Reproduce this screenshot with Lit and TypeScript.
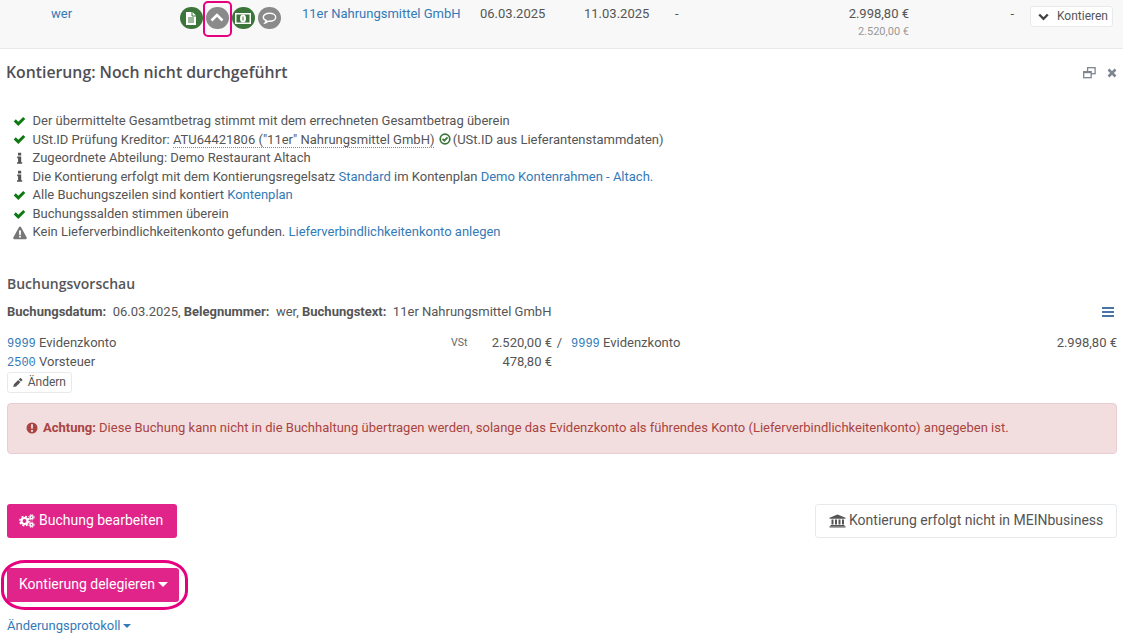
import { LitElement, html, css, svg } from "lit";
import { customElement } from "lit/decorators.js";

const check = svg`<path d="M.8 6.900 3 4.700l2.700 2.700L11 2.100l2.200 2.200-7.500 7.500z"/>`;
const info = svg`<path d="M4 .8h3.200v2.600H4zM3.200 4.600h4v5.600h1v1.600H3v-1.600h1.100V6.200h-.9z"/>`;
const warn = svg`<path fill-rule="evenodd" d="M7 .6c.5 0 .9.300 1.100.7l5.600 10.200c.4.800-.1 1.700-1 1.700H1.300c-.9 0-1.400-.9-1-1.700L5.900 1.300C6.100.9 6.500.6 7 .6zM6 4.400l.2 4.600h1.600L8 4.400zM6.100 9.800v1.800h1.800V9.800z"/>`;

type Row = { icon: "check" | "info" | "warn"; body: unknown };

@customElement("app-root")
export class AppRoot extends LitElement {
  static styles = css`
    :host { display: block; width: 1123px; height: 636px; overflow: hidden; position: relative; background: #fff;
      font-family: Roboto, "Liberation Sans", sans-serif; font-size: 13px; line-height: 18.57px; color: #555; }
    a { color: #337ab7; text-decoration: none; }
    svg { display: block; }

    .top { background: #f8f8f8; border-bottom: 1px solid #e7eaec; display: grid;
      grid-template-columns: 129px 122px 178px 104px 91px 234px 105px 1fr; padding: 5px 0 0 51px; height: 43px; position: relative; }
    .icons { display: flex; gap: 3.5px; padding-top: 2px; }
    .dot { width: 22.500px; height: 22px; border-radius: 50%; display: flex; align-items: center; justify-content: center; background: #8a8a8a; flex: none; }
    .dot.green { background: #3b7539; }
    .price { display: grid; grid-template-columns: 1fr auto; }
    .amount { display: flex; flex-direction: column; align-items: flex-end; }
    .amount small { font-size: 11px; color: #999; margin-top: 1px; line-height: 14px; }
    .dash-r { text-align: right; }
    .k-btn { margin: 1px 0 0 16px; height: 19px; border: 1px solid #e7eaec; border-radius: 3px; background: #fff; display: flex; align-items: center; gap: 8px; padding-left: 7px; width: 74px; font-size: 12px; color: #555; white-space: nowrap; }
    .highlight { position: absolute; left: 202.500px; top: 1px; width: 29px; height: 36px; border: 2.500px solid #e6007e; border-radius: 5px; box-sizing: border-box; }

    .panel { padding: 0 6px 0 7px; }
    .head { display: flex; justify-content: space-between; align-items: center; height: 47px; }
    h2 { margin: 0 0 0 -1px; font-family: "Open Sans", sans-serif; font-weight: 600; font-size: 15.800px; color: #4f4f55; }
    .head-icons { display: flex; gap: 11px; align-items: center; }
    .list { margin-top: 16px; display: flex; flex-direction: column; }
    .li { display: grid; grid-template-columns: 25.500px 1fr; align-items: center; white-space: nowrap; }
    .li svg { justify-self: center; }
    .usid { border-bottom: 1px dotted #888; }
    .inline-ok { display: inline-block; vertical-align: -1px; margin: 0 2px 0 1px; }

    h3 { margin: 32px 0 0; font-family: "Open Sans", sans-serif; font-weight: 600; font-size: 14px; line-height: 20px; color: #55555a; }
    .meta { display: flex; justify-content: space-between; align-items: center; margin-top: 9px; height: 19px; white-space: pre; }
    .menu { display: flex; flex-direction: column; gap: 2px; width: 12px; margin-right: 3px; }
    .menu i { height: 2px; background: #4a74a8; display: block; }

    .booking { display: grid; grid-template-columns: 444px 30px 71px 12px 1fr 110px; grid-auto-rows: 18.570px; margin-top: 12px; white-space: nowrap; }
    .num { font-family: "Liberation Mono", monospace; font-size: 12px; color: #337ab7; line-height: 1; }
    .vst { font-size: 10.500px; color: #666; }
    .right { text-align: right; }
    .amt { grid-column: 2 / span 2; text-align: right; }
    .slash { text-align: right; padding-right: 2px; }
    .second { padding-left: 7px; }
    .edit { display: inline-flex; align-items: center; gap: 5px; height: 21px; padding: 0 5px; width: 65px; box-sizing: border-box; border: 1px solid #e7eaec; border-radius: 3px; font-size: 12px; margin-top: 1px; }

    .alert { margin-top: 9px; height: 51px; box-sizing: border-box; background: #f2dede; border: 1px solid #ebccd1; border-radius: 4px; color: #a94442; display: flex; align-items: center; padding-left: 18px; gap: 5px; white-space: nowrap; }

    .actions { display: flex; justify-content: space-between; margin-top: 50px; }
    .btn { height: 34px; display: inline-flex; align-items: center; box-sizing: border-box; border-radius: 3px; font-size: 14px; }
    .pink { background: #e0248a; color: #fff; }
    .ghost { background: #fff; border: 1px solid #e7eaec; color: #555; width: 302px; padding-left: 13px; gap: 3px; white-space: nowrap; }
    .edit-btn { width: 170px; padding-left: 12px; gap: 4px; }
    .delegate { width: 172px; margin-top: 30px; padding-left: 12px; display: flex; gap: 3px; }
    .ring { position: absolute; left: 1px; top: 560px; width: 187px; height: 50px; box-sizing: border-box; border: 3px solid #e6007e; border-radius: 24px / 19px; }
    .caret { width: 0; height: 0; border-left: 5px solid transparent; border-right: 5px solid transparent; border-top: 5px solid currentColor; display: inline-block; }
    .log { margin-top: 15px; display: flex; align-items: center; gap: 2px; color: #337ab7; }
    .log .caret { border-left-width: 4.500px; border-right-width: 4.500px; border-top-width: 4.500px; }
  `;

  private icon(k: Row["icon"]) {
    if (k === "check") return html`<svg width="13" height="13" viewBox="0 0 14 14" fill="#0c7a10">${check}</svg>`;
    if (k === "info") return html`<svg width="11" height="13" viewBox="0 0 11 13" fill="#555">${info}</svg>`;
    return html`<svg width="14" height="14" viewBox="0 0 14 14" fill="#777">${warn}</svg>`;
  }

  render() {
    const rows: Row[] = [
      { icon: "check", body: "Der übermittelte Gesamtbetrag stimmt mit dem errechneten Gesamtbetrag überein" },
      { icon: "check", body: html`USt.ID Prüfung Kreditor: <span class="usid">ATU64421806 ("11er" Nahrungsmittel GmbH)</span> <svg class="inline-ok" width="12" height="12" viewBox="0 0 12 12" fill="none" stroke="#3b7539" stroke-width="1.700"><circle cx="6" cy="6" r="4.800"/><path d="M3.500 5.800l1.900 1.900 3.100-3.300"/></svg>(USt.ID aus Lieferantenstammdaten)` },
      { icon: "info", body: "Zugeordnete Abteilung: Demo Restaurant Altach" },
      { icon: "info", body: html`Die Kontierung erfolgt mit dem Kontierungsregelsatz <a>Standard</a> im Kontenplan <a>Demo Kontenrahmen - Altach.</a>` },
      { icon: "check", body: html`Alle Buchungszeilen sind kontiert <a>Kontenplan</a>` },
      { icon: "check", body: "Buchungssalden stimmen überein" },
      { icon: "warn", body: html`Kein Lieferverbindlichkeitenkonto gefunden. <a>Lieferverbindlichkeitenkonto anlegen</a>` },
    ];
    return html`
      <div class="top">
        <a>wer</a>
        <div class="icons">
          <span class="dot green"><svg width="14" height="15" viewBox="0 0 14 15"><path d="M2 1h6.500L12 4.500V14H2z" fill="#fff"/><path d="M4 7h6M4 9h6M4 11h6" stroke="#3b7539"/><path d="M8 1v4h4" fill="none" stroke="#3b7539"/></svg></span>
          <span class="dot"><svg width="14" height="10" viewBox="0 0 14 10"><path d="M1.500 7.500 7 2l5.500 5.500" fill="none" stroke="#fff" stroke-width="2.600"/></svg></span>
          <span class="dot green"><svg width="16" height="11" viewBox="0 0 16 11"><rect width="16" height="11" fill="#fff"/><rect x="1.500" y="1.500" width="13" height="8" fill="#3b7539"/><ellipse cx="8" cy="5.500" rx="3" ry="4" fill="#fff"/><path d="M8 3.500v4" stroke="#3b7539"/></svg></span>
          <span class="dot"><svg width="15" height="13" viewBox="0 0 15 13"><path d="M7.500 1.200c3.400 0 6.200 1.700 6.200 4s-2.800 4-6.200 4l-1.200-.1c-.8.800-2 1.700-3.300 1.900.6-.7 1-1.600 1.200-2.500C2.500 7.800 1.300 6.600 1.300 5.200c0-2.300 2.800-4 6.200-4z" fill="none" stroke="#fff" stroke-width="1.400"/></svg></span>
        </div>
        <a>11er Nahrungsmittel GmbH</a>
        <span>06.03.2025</span>
        <span>11.03.2025</span>
        <span class="price"><span>-</span><span class="amount"><span>2.998,80 €</span><small>2.520,00 €</small></span></span>
        <span class="dash-r">-</span>
        <div><span class="k-btn"><svg width="11" height="8" viewBox="0 0 11 8"><path d="M1.200 1.500 5.500 5.800 9.800 1.500" fill="none" stroke="#444" stroke-width="2.400"/></svg>Kontieren</span></div>
        <span class="highlight"></span>
      </div>
      <div class="panel">
        <div class="head">
          <h2>Kontierung: Noch nicht durchgeführt</h2>
          <div class="head-icons">
            <svg width="13" height="12" viewBox="0 0 13 12" fill="none" stroke="#7d8590" stroke-width="1.300"><rect x="4.600" y=".7" width="7.500" height="6"/><rect x=".7" y="4.700" width="7.500" height="6" fill="#fff"/><path d="M.7 5.200h7.500" stroke-width="2"/></svg>
            <svg width="10" height="10" viewBox="0 0 10 10"><path d="M1.500 1.500l7 7M8.500 1.500l-7 7" stroke="#7d8590" stroke-width="2.600"/></svg>
          </div>
        </div>
        <div class="list">
          ${rows.map((r) => html`<div class="li">${this.icon(r.icon)}<span>${r.body}</span></div>`)}
        </div>
        <h3>Buchungsvorschau</h3>
        <div class="meta"><span><b>Buchungsdatum:</b>  06.03.2025, <b>Belegnummer:</b>  wer, <b>Buchungstext:</b>  11er Nahrungsmittel GmbH</span><span class="menu"><i></i><i></i><i></i></span></div>
        <div class="booking">
          <span><span class="num">9999</span> Evidenzkonto</span>
          <span class="vst">VSt</span>
          <span class="right">2.520,00 €</span>
          <span class="slash">/</span>
          <span class="second"><span class="num">9999</span> Evidenzkonto</span>
          <span class="right">2.998,80 €</span>
          <span><span class="num">2500</span> Vorsteuer</span>
          <span class="amt">478,80 €</span>
        </div>
        <span class="edit"><svg width="11" height="11" viewBox="0 0 11 11" fill="#555"><path d="M.3 10.700l.7-3.200 4.900-4.900 2.500 2.500-4.900 4.900zM6.500 2 7.900.6c.3-.3.700-.3 1 0l1.500 1.500c.3.300.3.700 0 1L9 4.500z"/></svg>Ändern</span>
        <div class="alert">
          <svg width="12" height="12" viewBox="0 0 12 12"><circle cx="6" cy="6" r="5.500" fill="#a94442"/><path d="M5 2.200h2l-.2 4.600H5.200zM5 8h2v1.800H5z" fill="#f2dede"/></svg>
          <span><b>Achtung:</b> Diese Buchung kann nicht in die Buchhaltung übertragen werden, solange das Evidenzkonto als führendes Konto (Lieferverbindlichkeitenkonto) angegeben ist.</span>
        </div>
        <div class="actions">
          <span class="btn pink edit-btn"><svg width="16" height="14" viewBox="0 0 16 14" fill="none" stroke="#fff"><circle cx="5.500" cy="7" r="3" stroke-width="2.200"/><circle cx="5.500" cy="7" r="4.600" stroke-width="1.600" stroke-dasharray="2 1.600"/><circle cx="12.500" cy="3.300" r="1.500" stroke-width="1.400"/><circle cx="12.500" cy="3.300" r="2.700" stroke-width="1" stroke-dasharray="1.200 1"/><circle cx="12.500" cy="10.700" r="1.500" stroke-width="1.400"/><circle cx="12.500" cy="10.700" r="2.700" stroke-width="1" stroke-dasharray="1.200 1"/></svg>Buchung bearbeiten</span>
          <span class="btn ghost"><svg width="17" height="14" viewBox="0 0 17 14" fill="#555"><path d="M8.500 .5 16.500 3.800v1H.5v-1z"/><path d="M2.500 5.500h2v5h-2zM6 5.500h2v5H6zM9.500 5.500h2v5h-2zM13 5.500h2v5h-2zM1.500 11h14v1h-14zM.5 12.200h16v1.300H.5z"/></svg>Kontierung erfolgt nicht in MEINbusiness</span>
        </div>
        <div class="btn pink delegate">Kontierung delegieren<span class="caret"></span></div>
        <div class="log">Änderungsprotokoll<span class="caret"></span></div>
      </div>
      <span class="ring"></span>
    `;
  }
}
